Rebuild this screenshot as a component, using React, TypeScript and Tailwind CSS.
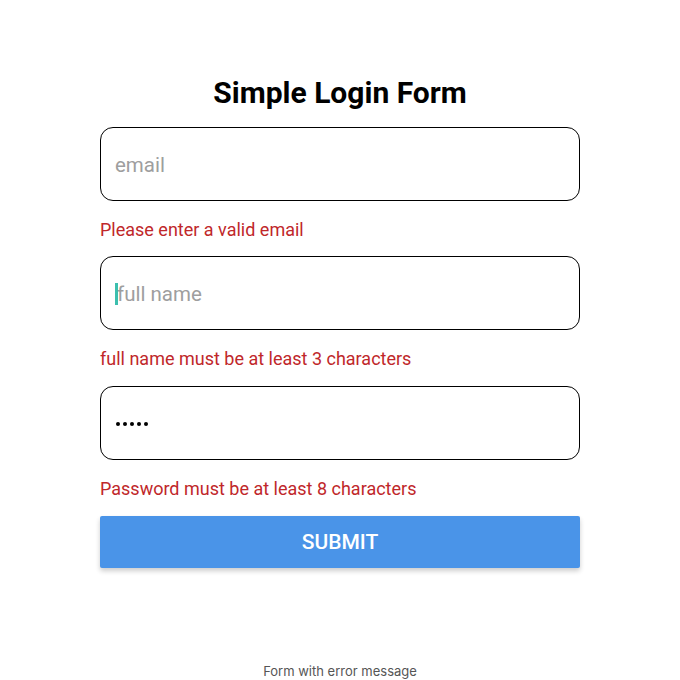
import React from "react";

export default function App() {
  return (
    <div className="w-[680px] h-[680px] bg-white flex flex-col items-center overflow-hidden" style={{ fontFamily: "Roboto, sans-serif" }}>
      <h1 className="mt-[74px] text-[30px] leading-[38px] font-bold text-black">Simple Login Form</h1>
      <div className="w-[480px] mt-[15px] flex flex-col">
        <div className="h-[74px] border-[1.5px] border-black rounded-[13px] flex items-center px-[14px] pt-[2px]">
          <span className="text-[20.5px] text-[#9e9e9e]">email</span>
        </div>
        <div className="mt-[19px] text-[18px] leading-[20px] text-[#c0272a]">Please enter a valid email</div>
        <div className="mt-[16px] h-[74px] border-[1.5px] border-black rounded-[13px] flex items-center px-[14px] pt-[2px]">
          <span className="w-[3px] h-[22px] bg-[#3cbfae] mr-[-1px]"></span>
          <span className="text-[20.5px] text-[#9e9e9e]">full name</span>
        </div>
        <div className="mt-[19px] text-[18px] leading-[20px] text-[#c0272a]">full name must be at least 3 characters</div>
        <div className="mt-[17px] h-[74px] border-[1.5px] border-black rounded-[13px] flex items-center px-[15px] gap-[3px] pt-[2px]">
          <span className="w-[4px] h-[4px] rounded-full bg-black"></span>
          <span className="w-[4px] h-[4px] rounded-full bg-black"></span>
          <span className="w-[4px] h-[4px] rounded-full bg-black"></span>
          <span className="w-[4px] h-[4px] rounded-full bg-black"></span>
          <span className="w-[4px] h-[4px] rounded-full bg-black"></span>
        </div>
        <div className="mt-[19px] text-[18px] leading-[20px] text-[#c0272a]">Password must be at least 8 characters</div>
        <button className="mt-[17px] h-[52px] bg-[#4a94e8] rounded-[2px] text-white text-[21px] font-medium pt-[2px] shadow-[0_3px_5px_rgba(0,0,0,0.2)]">SUBMIT</button>
      </div>
      <div className="mt-[95px] text-[13px] leading-[16px] text-[#555]" style={{ fontFamily: "Inter, sans-serif" }}>Form with error message</div>
    </div>
  );
}
